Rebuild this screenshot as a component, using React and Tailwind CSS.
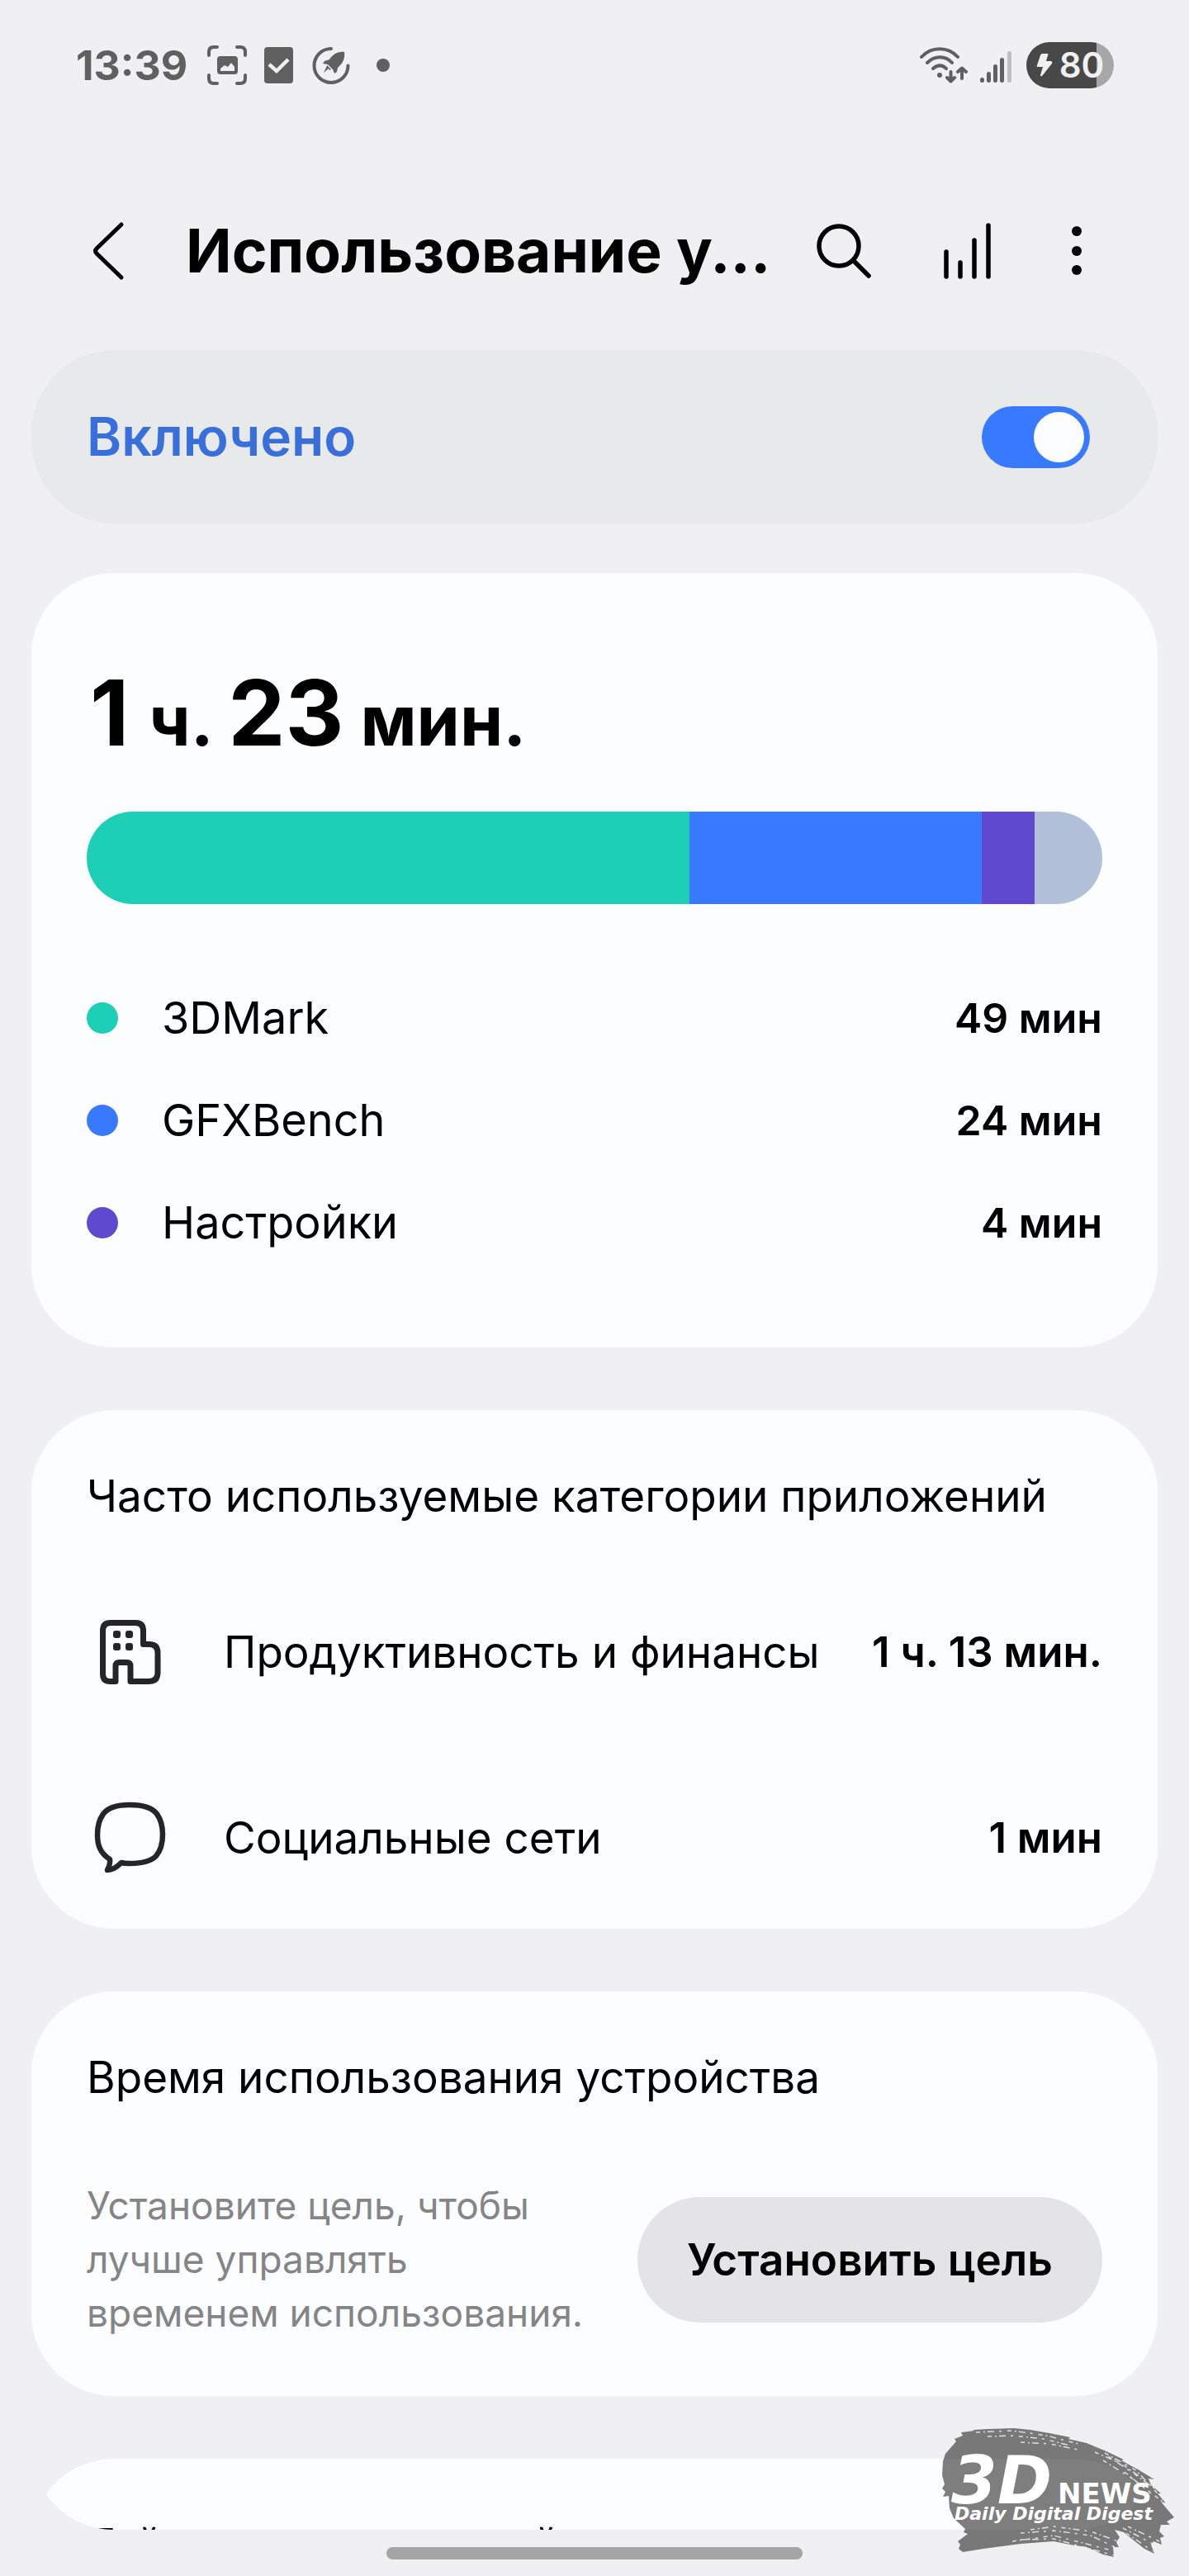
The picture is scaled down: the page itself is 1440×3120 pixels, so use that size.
import React, { useState } from 'react';

const usage = [
    { name: '3DMark', time: '49 мин', share: 730, color: 'bg-[#1ecfb8]' },
    { name: 'GFXBench', time: '24 мин', share: 354, color: 'bg-[#387aff]' },
    { name: 'Настройки', time: '4 мин', share: 64, color: 'bg-[#5f4acf]' },
];

const rest = { share: 82, color: 'bg-[#b1bfd9]' };

const categories = [
    { name: 'Продуктивность и финансы', time: '1 ч. 13 мин.', Icon: BuildingIcon },
    { name: 'Социальные сети', time: '1 мин', Icon: ChatIcon },
];

function BuildingIcon() {
    return (
        <svg viewBox="0 0 90 90" className="w-[90px] h-[90px] shrink-0" fill="none" stroke="#252527" strokeWidth="7" strokeLinejoin="round" aria-hidden="true">
            <path d="M35 80.500H28Q19.500 80.500 19.500 71V19Q19.500 9.500 29 9.500H59Q68.500 9.500 68.500 19V35.500H76Q86 35.500 86 46V70Q86 80.500 75 80.500H53V62Q53 57.500 48.500 57.500H39.500Q35 57.500 35 62Z" />
            <g fill="#252527" stroke="none">
                <rect x="32" y="19" width="9" height="9" rx="3" />
                <rect x="47" y="19" width="9" height="9" rx="3" />
                <rect x="32" y="34" width="9" height="9" rx="3" />
                <rect x="47" y="34" width="9" height="9" rx="3" />
            </g>
        </svg>
    );
}

function ChatIcon() {
    return (
        <svg viewBox="0 0 90 90" className="w-[90px] h-[90px] shrink-0 overflow-visible" fill="none" stroke="#252527" strokeWidth="6.500" strokeLinejoin="round" aria-hidden="true">
            <path d="M52 5C68 5 79 8 85 16C90 23 92 31 92 41C92 52 89 61 84 67C77 74 65 76 52 76Q46 76 42 75C37 80 31 84 25 84C27 80 29 76 28 71C16 63 13 54 13 41C13 31 15 23 20 16C26 8 37 5 52 5Z" />
        </svg>
    );
}

function StatusBar() {
    return (
        <div className="flex h-[158px] shrink-0 items-center justify-between pl-[92px] pr-[91px] text-[#606060]">
            <div className="flex items-center">
                <span className="text-[50px] leading-[64px] font-bold">13:39</span>
                <svg viewBox="0 0 48 48" className="ml-6 w-12 h-12" fill="none" stroke="currentColor" strokeWidth="4" strokeLinecap="round" aria-hidden="true">
                    <path d="M2 12V8Q2 2 8 2H12M36 2H40Q46 2 46 8V12M46 36V40Q46 46 40 46H36M12 46H8Q2 46 2 40V36" />
                    <rect x="12" y="13" width="25" height="22" rx="4" fill="currentColor" stroke="none" />
                    <path d="M16 31V28L21 24L25 26L29 21L33 26V31Z" fill="#f0f0f2" stroke="none" />
                </svg>
                <svg viewBox="0 0 36 44" className="ml-[21px] w-9 h-11" aria-hidden="true">
                    <rect width="35" height="44" rx="4" fill="currentColor" />
                    <path d="M6 21L15 29L29 15" fill="none" stroke="#f0f0f2" strokeWidth="4.500" />
                </svg>
                <svg viewBox="0 0 46 46" className="ml-[22px] w-[46px] h-[46px]" fill="none" stroke="currentColor" strokeWidth="4" strokeLinecap="round" aria-hidden="true">
                    <path d="M23 3A20.500 20.500 0 1 0 43.500 23.500" />
                    <path d="M39 7C31 6 25 10 21 16L15 18L13 21L19 22L25 28L27 33L30 31L31 26C37 21 40 15 39 7ZM18 23L23 28L21 29L20 27L14 32L17 26Z" fill="currentColor" stroke="none" />
                </svg>
                <span className="ml-8 w-4 h-4 rounded-full bg-[#606060]" />
            </div>
            <div className="flex items-center">
                <svg viewBox="0 0 58 46" className="w-[58px] h-[46px]" fill="none" stroke="currentColor" strokeWidth="4" strokeLinecap="round" strokeLinejoin="round" aria-hidden="true">
                    <path d="M2 13C14 0 34 0 46 13M9 20C18 11 31 11 39 20M16 27C22 22 27 22 32 27" />
                    <circle cx="24" cy="35" r="3" fill="currentColor" stroke="none" />
                    <path d="M37.500 31V42M33 38L37.500 42.500L42 38M51 39V27M46 31L51 26.500L56 31" />
                </svg>
                <svg viewBox="0 0 38 46" className="ml-[15px] w-[38px] h-[46px]" fill="currentColor" aria-hidden="true">
                    <rect x="0" y="38" width="5" height="6" rx="2.500" />
                    <rect x="8" y="31" width="5" height="13" rx="2.500" />
                    <rect x="16" y="22" width="5" height="22" rx="2.500" />
                    <rect x="24" y="14" width="5" height="30" rx="2.500" />
                    <rect x="33" y="6" width="5" height="38" rx="2.500" opacity="0.35" />
                </svg>
                <div className="ml-[18px] flex h-14 w-[106px] items-center justify-center gap-2 rounded-full bg-linear-to-r from-[#484848] from-80% to-[#a7a7a9] to-80% text-[#f0f0f2]">
                    <svg viewBox="0 0 20 30" className="w-5 h-[30px]" fill="currentColor" aria-hidden="true">
                        <path d="M7 1H14Q15 1 14 3L12 10H18Q20 11 19 13L7 28Q5 29 5 27L8 17H2Q0 17 1 15L5 3Q6 1 7 1Z" />
                    </svg>
                    <span className="text-[42px] leading-[56px] font-semibold">80</span>
                </div>
            </div>
        </div>
    );
}

function Header() {
    return (
        <header className="flex h-[266px] shrink-0 items-center pt-[26px] pl-[107px] pr-[100px]">
            <button type="button" aria-label="Назад" className="shrink-0">
                <svg viewBox="0 0 48 72" className="w-12 h-[72px]" fill="none" stroke="#000" strokeWidth="5" strokeLinecap="round" strokeLinejoin="round">
                    <path d="M40 4L10 33Q7 36 10 39L40 68" />
                </svg>
            </button>
            <h1 className="ml-[70px] min-w-0 flex-1 whitespace-nowrap text-[73px] leading-[96px] font-bold">Использование у...</h1>
            <button type="button" aria-label="Поиск" className="shrink-0">
                <svg viewBox="0 0 72 72" className="w-[72px] h-[72px]" fill="none" stroke="#000" strokeWidth="5.500" strokeLinecap="round">
                    <circle cx="30" cy="30" r="24" />
                    <path d="M48 48L66 66" />
                </svg>
            </button>
            <button type="button" aria-label="Статистика" className="ml-[82px] shrink-0">
                <svg viewBox="0 0 64 72" className="w-16 h-[72px]" stroke="#000" strokeWidth="5.500" strokeLinecap="round">
                    <path d="M6 37V67M23 50V67M40 23V67M57 5V67" />
                </svg>
            </button>
            <button type="button" aria-label="Ещё" className="ml-16 shrink-0">
                <svg viewBox="0 0 72 72" className="w-[72px] h-[72px]" fill="#000">
                    <circle cx="36" cy="12" r="6" />
                    <circle cx="36" cy="36" r="6" />
                    <circle cx="36" cy="59" r="6" />
                </svg>
            </button>
        </header>
    );
}

function Card({ className = '', children }) {
    return <section className={`shrink-0 rounded-[100px] bg-[#fcfdff] px-[67px] ${className}`}>{children}</section>;
}

function Watermark() {
    return (
        <svg viewBox="0 0 288 160" className="absolute bottom-5 right-4 w-[288px] h-40" aria-label="3DNews">
            <path
                fill="#000"
                fillOpacity="0.5"
                d="M28 6L44 4L42 3L60 2L92 1L112 3L135 7L160 12L158 14L180 19L204 29L225 39L222 40L244 52L262 63L255 62L258 70L270 80L266 80L276 92L270 90L280 102L286 109L277 114L281 118L270 118L268 126L274 132L269 134L271 142L261 138L258 142L262 153L250 147L236 136L225 127L214 124L220 133L216 139L219 145L212 145L213 157L200 154L180 145L160 142L140 138L100 141L55 147L30 151L25 147L27 142L24 138L36 129L31 127L33 123L19 110L14 98L13 83L6 84L9 78L5 74L8 69L5 58L6 41L9 32L22 17L20 14L30 10Z"
            />
            <g stroke="#f0f0f2" strokeWidth="1.500" fill="none" opacity="0.85" strokeDasharray="5 4 2 3 8 6 3 7">
                <path d="M46 6L90 4L132 10L170 20M60 11L92 10L128 14L160 22M100 18L135 20L175 28" />
                <path d="M190 30L222 44L248 62M202 31L240 52L266 80M206 35L236 55L262 74M200 40L235 62L275 92M226 54L258 80" />
                <path d="M112 124L140 120L185 126L218 138M100 128L140 125L185 131L214 145M90 138L140 131L210 149M100 136L140 135L213 155" />
                <path d="M224 122L262 142M230 120L268 138M228 128L260 150" />
            </g>
            <g fill="#fff" fontFamily='"DejaVu Sans", sans-serif' fontWeight="bold">
                <text x="16" y="92" fontSize="80" fontStyle="italic">3D</text>
                <text x="145" y="92" fontSize="34">NEWS</text>
                <text x="20" y="112" fontSize="22" fontStyle="italic">Daily Digital Digest</text>
            </g>
        </svg>
    );
}

export default function App() {
    const [enabled, setEnabled] = useState(true);

    return (
        <div className="relative flex h-screen flex-col bg-[#f0f0f2] font-[Inter,sans-serif] text-black">
            <StatusBar />
            <Header />

            <main className="mx-[38px] flex min-h-0 flex-1 flex-col overflow-hidden rounded-b-[100px]">
                <label className="flex min-h-[210px] shrink-0 items-center justify-between rounded-[100px] bg-[#e8e9eb] pl-[67px] pr-[82px]">
                    <span className="text-[64px] leading-[80px] font-semibold text-[#386fdb]">Включено</span>
                    <input
                        type="checkbox"
                        role="switch"
                        checked={enabled}
                        onChange={(e) => setEnabled(e.target.checked)}
                        className="flex h-[75px] w-[131px] appearance-none items-center rounded-full bg-[#a7a7a9] px-[7px] before:h-[61px] before:w-[61px] before:rounded-full before:bg-[#fcfdff] checked:justify-end checked:bg-[#387aff]"
                    />
                </label>

                <Card className="mt-15 pt-[109px] pb-[89px]">
                    <p className="text-[84px] leading-[120px] font-bold">
                        <span className="mx-1 text-[110px]">1</span> ч. <span className="text-[110px]">23</span> мин.
                    </p>
                    <div className="mt-[50px] flex h-28 overflow-hidden rounded-full">
                        {[...usage, rest].map((part) => (
                            <div key={part.color} className={part.color} style={{ flexGrow: part.share }} />
                        ))}
                    </div>
                    <ul className="mt-19">
                        {usage.map((app) => (
                            <li key={app.name} className="flex h-31 items-center">
                                <span className={`h-[38px] w-[38px] rounded-full ${app.color}`} />
                                <span className="ml-[53px] flex-1 text-[54px] leading-[64px]">{app.name}</span>
                                <span className="text-[50px] leading-[64px] font-semibold">{app.time}</span>
                            </li>
                        ))}
                    </ul>
                </Card>

                <Card className="mt-19 pt-18 pb-[54px]">
                    <h2 className="text-[53px] leading-[64px]">Часто используемые категории приложений</h2>
                    <ul className="mt-[101px] flex flex-col gap-[113px]">
                        {categories.map(({ name, time, Icon }) => (
                            <li key={name} className="flex h-28 items-center">
                                <Icon />
                                <span className="ml-[76px] flex-1 whitespace-nowrap text-[53px] leading-[64px]">{name}</span>
                                <span className="whitespace-nowrap text-[51px] leading-[64px] font-semibold">{time}</span>
                            </li>
                        ))}
                    </ul>
                </Card>

                <Card className="mt-19 pt-18 pb-[68px]">
                    <h2 className="text-[53px] leading-[64px]">Время использования устройства</h2>
                    <div className="mt-[91px] flex items-center justify-between">
                        <p className="whitespace-nowrap text-[46px] leading-[65px] text-[#858587]">
                            Установите цель, чтобы<br />лучше управлять<br />временем использования.
                        </p>
                        <button type="button" className="h-38 shrink-0 whitespace-nowrap rounded-full bg-[#e4e4e6] px-15 text-[53px] leading-[64px] font-semibold">
                            Установить цель
                        </button>
                    </div>
                </Card>

                <Card className="mt-19 pt-18 pb-18">
                    <h2 className="text-[53px] leading-[64px]">Таймеры приложений</h2>
                </Card>
            </main>

            <footer className="flex h-14 shrink-0 items-center justify-center">
                <div className="h-[15px] w-[35%] rounded-full bg-[#a5a5a6]" />
            </footer>
            <Watermark />
        </div>
    );
}
